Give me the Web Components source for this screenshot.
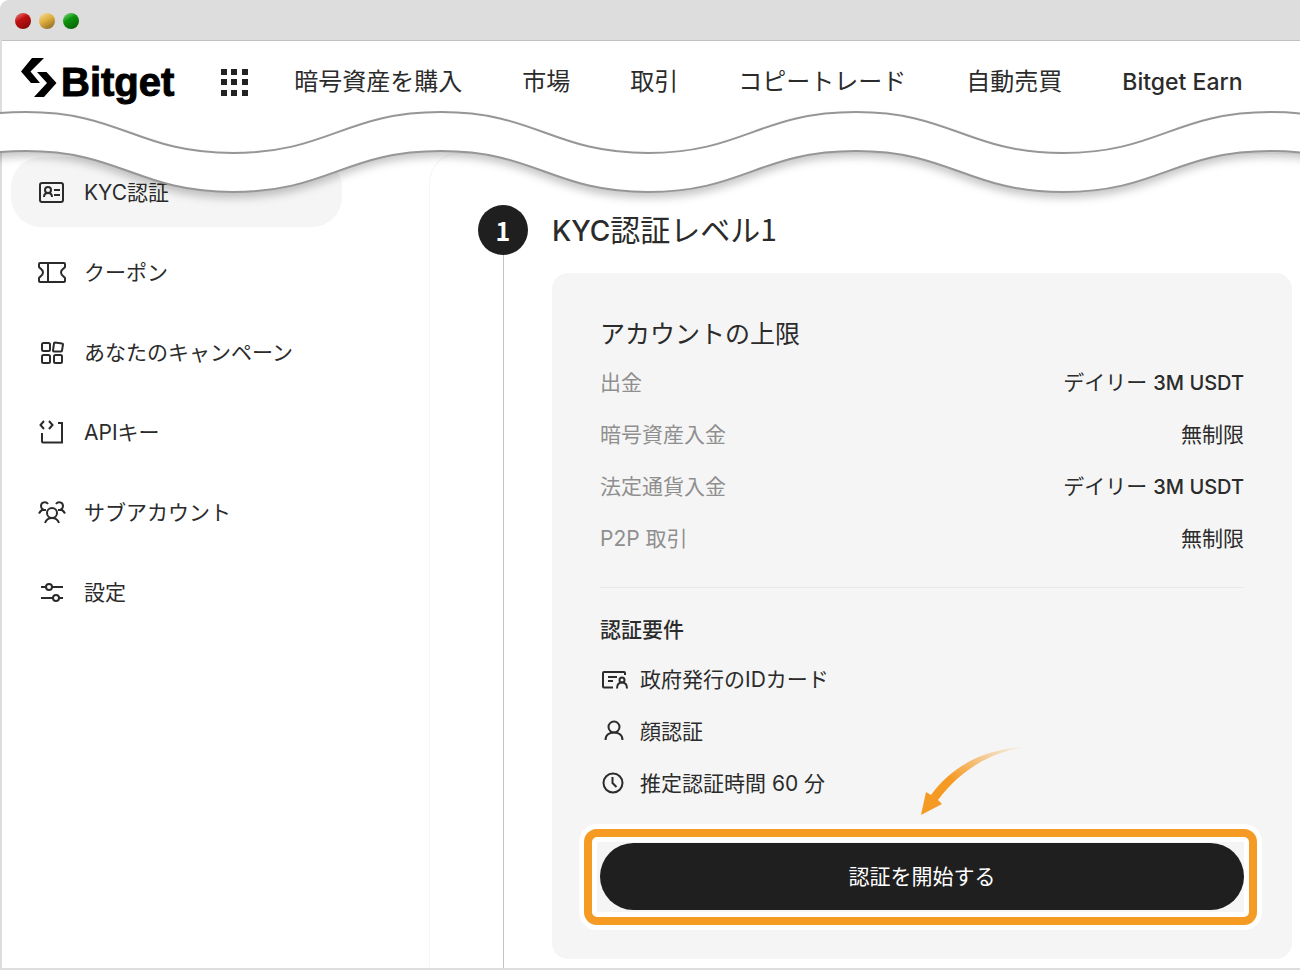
<!DOCTYPE html>
<html lang="ja">
<head>
<meta charset="utf-8">
<meta name="viewport" content="width=device-width, initial-scale=1">
<title>Bitget KYC認証</title>
<style>
    body {
        margin: 0;
        background: #fff;
        color: #2b2b2b;
        font-family: Inter, "Noto Sans CJK JP", sans-serif;
        font-size: 21px;
    }
    b {
        font-family: Inter, sans-serif;
        font-size: 28px;
        font-weight: 500;
    }
</style>
</head>
<body>
<browser-window>
    <site-header>
        <nav-link>暗号資産を購入</nav-link>
        <nav-link>市場</nav-link>
        <nav-link>取引</nav-link>
        <nav-link>コピートレード</nav-link>
        <nav-link>自動売買</nav-link>
        <nav-link latin>Bitget Earn</nav-link>
    </site-header>
    <wave-break></wave-break>
    <page-columns>
        <side-item slot="side" icon="idcard" active>KYC認証</side-item>
        <side-item slot="side" icon="coupon">クーポン</side-item>
        <side-item slot="side" icon="apps">あなたのキャンペーン</side-item>
        <side-item slot="side" icon="api">APIキー</side-item>
        <side-item slot="side" icon="users">サブアカウント</side-item>
        <side-item slot="side" icon="sliders">設定</side-item>
        <kyc-step number="1">
            <span slot="title"><b>KYC</b>認証レベル1</span>
            <kyc-card heading="アカウントの上限" requirements="認証要件">
                <limit-row slot="limits" label="出金" value="デイリー" amount="3M USDT"></limit-row>
                <limit-row slot="limits" label="暗号資産入金" value="無制限"></limit-row>
                <limit-row slot="limits" label="法定通貨入金" value="デイリー" amount="3M USDT"></limit-row>
                <limit-row slot="limits" label="P2P 取引" value="無制限"></limit-row>
                <requirement-item icon="idscan">政府発行のIDカード</requirement-item>
                <requirement-item icon="person">顔認証</requirement-item>
                <requirement-item icon="clock">推定認証時間 60 分</requirement-item>
                <start-button slot="action">認証を開始する</start-button>
            </kyc-card>
        </kyc-step>
    </page-columns>
</browser-window>

<script>
const icons = {
    idcard: `<rect x="2" y="5" width="23" height="19" rx="2"/>
        <circle cx="10" cy="12" r="3"/><path d="M6 19c0-3 2-4 4-4s4 1 4 4M16 12h6M16 17h6"/>`,
    coupon: `<path d="M2 5h24q1 0 1 1v3c0 1-4 2-4 5.500s4 4.500 4 5.500v3q0 1-1 1H2q-1 0-1-1v-3c0-1 4-2 4-5.500S1 10 1 9V6q0-1 1-1zM10 5v19"/>`,
    apps: `<rect x="4" y="5" width="8" height="8" rx="1.500"/><path d="M17 4.500l7 1q1 0 1 1l-1 6q0 1-1 1h-7q-1 0-1-1l1-7q0-1 1-1z"/>
        <rect x="4" y="17" width="8" height="8" rx="1.500"/><rect x="16" y="17" width="8" height="8" rx="1.500"/>`,
    api: `<path d="M6 3L2.500 7 6 11M11 3l3.500 4L11 11M20 5h4v19.500H5q-1 0-1-1V15"/>`,
    users: `<circle cx="14" cy="15" r="5"/><path d="M7 25c1-3 4-5 7-5s6 2 7 5M10 6C8 3 3 4 3 8c0 2 1 3 2 3.500-2 1-3 2-4 4M5 12h3M18 6c2-3 7-2 7 2 0 2-1 3-2 3.500 2 1 3 2 4 4M23 12h-3"/>`,
    sliders: `<path d="M3 9h5M14 9h11M3 20h12M21 20h4"/><circle cx="11" cy="9" r="3"/><circle cx="18" cy="20" r="3"/>`,
    idscan: `<path d="M13 22.500H4q-1 0-1-1V8q0-1 1-1h20q1 0 1 1v2M8 12h9M8 16h5"/>
        <circle cx="22" cy="15" r="2.500"/><path d="M17 23.500c0-4 2-6 5-6s5 2 5 6"/>`,
    person: `<circle cx="14" cy="10" r="5.500"/><path d="M5.500 23c0-5 4-7.500 8.500-7.500s8.500 2.500 8.500 7.500"/>`,
    clock: `<circle cx="13" cy="14" r="9.500"/><path d="M12.500 8v6l4 4"/>`
};

const iconSvg = (name) => `<svg width="28" height="28" viewBox="0 0 28 28" fill="none"
    stroke="currentColor" stroke-width="2" aria-hidden="true">${icons[name]}</svg>`;

class BaseElement extends HTMLElement {
    constructor() {
        super();
        this.attachShadow({mode: "open"});
    }
    connectedCallback() {
        this.shadowRoot.innerHTML = this.render();
    }
}

class BrowserWindow extends BaseElement {
    render() {
        return `
            <style>
                :host {
                    display: flex;
                    flex-direction: column;
                    box-sizing: border-box;
                    min-height: 100vh;
                    border-left: 2px solid #ddd;
                    border-bottom: 2px solid #ddd;
                    border-top-left-radius: 9px;
                }
                #bar {
                    display: flex;
                    align-items: center;
                    gap: 8px;
                    height: 41px;
                    padding: 2px 0 0 13px;
                    box-sizing: border-box;
                    background: #ddd;
                    border-bottom: 1px solid #c0c0c0;
                    border-top-left-radius: 7px;
                }
                i {
                    width: 16px;
                    height: 16px;
                    border-radius: 50%;
                }
                .red { background: linear-gradient(150deg, #e88 0, #c11010 40%, #7a0808 100%); }
                .yellow { background: linear-gradient(150deg, #f8e0a0 0, #dfae3e 45%, #7d5f1c 100%); }
                .green { background: linear-gradient(150deg, #8d8 0, #0c930c 40%, #075507 100%); }
            </style>
            <div id="bar"><i class="red"></i><i class="yellow"></i><i class="green"></i></div>
            <slot></slot>
        `;
    }
}

class SiteHeader extends BaseElement {
    render() {
        return `
            <style>
                :host {
                    display: flex;
                    align-items: center;
                    height: 81px;
                    padding-left: 19px;
                    overflow: hidden;
                    white-space: nowrap;
                }
                #logo {
                    display: flex;
                    align-items: center;
                    gap: 4px;
                    color: #000;
                    text-decoration: none;
                    font: bold 40px/48px "Liberation Sans", sans-serif;
                    -webkit-text-stroke: 1px #000;
                }
                #logo svg { margin-bottom: 8px; }
                button {
                    display: flex;
                    margin: 0 46px;
                    padding: 0;
                    border: 0;
                    background: none;
                }
                nav {
                    display: flex;
                    gap: 60px;
                }
            </style>
            <a id="logo" href="#">
                <svg width="36" height="40" viewBox="0 0 36 40" aria-hidden="true">
                    <path d="M11 0h12L9.500 13.500 19 25H10L0 13.500zM16 14h9.500l10 11L23 39H13L26 25z"/>
                </svg>
                <span>Bitget</span>
            </a>
            <button aria-label="メニュー">
                <svg width="28" height="28" fill="#222">
                    <path d="M1 1h6v6H1zM11 1h6v6h-6zM22 1h6v6h-6zM1 11h6v6H1zM11 11h6v6h-6zM22 11h6v6h-6zM1 22h6v6H1zM11 22h6v6h-6zM22 22h6v6h-6z"/>
                </svg>
            </button>
            <nav><slot></slot></nav>
        `;
    }
}

class NavLink extends BaseElement {
    render() {
        return `
            <style>
                :host { display: block; }
                a {
                    color: #2b2b2b;
                    text-decoration: none;
                    font-size: 24px;
                    line-height: 36px;
                }
                :host([latin]) a {
                    font-size: 23px;
                    font-weight: 500;
                }
            </style>
            <a href="#"><slot></slot></a>
        `;
    }
}

// Torn strip between the header and the page: two parallel waves, white in between
class WaveBreak extends BaseElement {
    render() {
        let wave = "";
        let back = "";
        for (let i = 0; i < 16; i++) {
            const dy = i % 2 ? -41 : 41;
            const dx = i % 2 ? 208 : 207;
            wave += `c95 0 112 ${dy} ${dx} ${dy}`;
            back = `c-${dx - 112} 0-${dx - 95} ${-dy}-${dx} ${-dy}` + back;
        }
        return `
            <style>
                :host {
                    display: block;
                    position: relative;
                    z-index: 1;
                    height: 31px;
                }
                svg {
                    position: absolute;
                    top: -11px;
                    left: -2px;
                    width: calc(100% + 2px);
                    height: 110px;
                    pointer-events: none;
                }
                .fill {
                    fill: #fff;
                    filter: drop-shadow(0 6px 4px rgba(0, 0, 0, .22));
                }
                .line {
                    fill: none;
                    stroke: #969696;
                    stroke-width: 2;
                }
            </style>
            <svg aria-hidden="true">
                <path class="fill" d="M-389 1${wave}v39${back}z"/>
                <path class="line" d="M-389 1${wave}"/>
                <path class="line" d="M-389 40${wave}"/>
            </svg>
        `;
    }
}

class PageColumns extends BaseElement {
    render() {
        return `
            <style>
                :host {
                    display: flex;
                    flex: 1;
                }
                aside {
                    flex: 0 0 427px;
                    box-sizing: border-box;
                    padding: 4px 87px 0 9px;
                }
                aside nav {
                    display: flex;
                    flex-direction: column;
                    gap: 10px;
                }
                main {
                    display: flex;
                    flex: 1;
                    padding: 51px 8px 0 48px;
                    border: 1px solid #f5f5f5;
                    border-width: 1px 0 0 1px;
                    border-top-left-radius: 30px;
                }
            </style>
            <aside><nav><slot name="side"></slot></nav></aside>
            <main><slot></slot></main>
        `;
    }
}

class SideItem extends BaseElement {
    render() {
        return `
            <style>
                :host { display: block; }
                a {
                    display: flex;
                    align-items: center;
                    gap: 18px;
                    height: 70px;
                    padding-left: 27px;
                    border-radius: 30px;
                    color: #2b2b2b;
                    text-decoration: none;
                    white-space: nowrap;
                }
                span { padding-bottom: 3px; }
                :host([active]) a { background: #f5f5f5; }
            </style>
            <a href="#">${iconSvg(this.getAttribute("icon"))}<span><slot></slot></span></a>
        `;
    }
}

class KycStep extends BaseElement {
    render() {
        return `
            <style>
                :host {
                    display: flex;
                    flex: 1;
                    gap: 24px;
                }
                #rail {
                    display: flex;
                    flex-direction: column;
                    align-items: center;
                }
                #number {
                    width: 50px;
                    height: 50px;
                    border-radius: 50%;
                    background: #1f1f1f;
                    color: #fff;
                    font: bold 25px/50px "Noto Sans CJK JP", sans-serif;
                    text-align: center;
                }
                #line {
                    flex: 1;
                    width: 1px;
                    background: #c4c4c4;
                }
                #content { flex: 1; }
                h1 {
                    height: 50px;
                    margin: 0 0 18px;
                    font: 400 30px/46px "Noto Sans CJK JP", sans-serif;
                }
            </style>
            <div id="rail">
                <div id="number">${this.getAttribute("number")}</div>
                <div id="line"></div>
            </div>
            <div id="content">
                <h1><slot name="title"></slot></h1>
                <slot></slot>
            </div>
        `;
    }
}

class KycCard extends BaseElement {
    render() {
        return `
            <style>
                :host {
                    display: block;
                    margin-bottom: 9px;
                    padding: 44px 48px 49px;
                    border-radius: 16px;
                    background: #f5f5f5;
                }
                h2, h3 {
                    margin: 0;
                    font-weight: 400;
                }
                h2 {
                    margin-bottom: 6px;
                    font-size: 25px;
                    line-height: 34px;
                }
                h3 {
                    margin-bottom: 7px;
                    font-size: 21px;
                    font-weight: 500;
                    line-height: 32px;
                }
                hr {
                    margin: 22px 0 26px;
                    border: 0;
                    border-top: 1px solid #e9e9e9;
                }
                #action { margin-top: 34px; }
            </style>
            <h2>${this.getAttribute("heading")}</h2>
            <slot name="limits"></slot>
            <hr>
            <h3>${this.getAttribute("requirements")}</h3>
            <slot></slot>
            <div id="action"><slot name="action"></slot></div>
        `;
    }
}

class LimitRow extends BaseElement {
    render() {
        const amount = this.getAttribute("amount");
        return `
            <style>
                :host { display: block; }
                dl {
                    display: flex;
                    justify-content: space-between;
                    margin: 0;
                    line-height: 52px;
                }
                dt { color: #8f8f8f; }
                dd { margin: 0; }
                b {
                    font-size: 20px;
                    font-weight: 500;
                }
            </style>
            <dl>
                <dt>${this.getAttribute("label")}</dt>
                <dd>${this.getAttribute("value")}${amount ? ` <b>${amount}</b>` : ""}</dd>
            </dl>
        `;
    }
}

class RequirementItem extends BaseElement {
    render() {
        return `
            <style>
                :host {
                    display: flex;
                    align-items: center;
                    gap: 12px;
                    height: 52px;
                }
                span { padding-bottom: 3px; }
            </style>
            ${iconSvg(this.getAttribute("icon"))}
            <span><slot></slot></span>
        `;
    }
}

class StartButton extends BaseElement {
    render() {
        return `
            <style>
                :host {
                    display: block;
                    position: relative;
                }
                button {
                    display: block;
                    width: 100%;
                    height: 67px;
                    padding: 0 0 3px;
                    border: 0;
                    border-radius: 34px;
                    background: #1f1f1f;
                    color: #fff;
                    font: inherit;
                }
                #ring {
                    position: absolute;
                    inset: -14px -13px -15px -16px;
                    box-sizing: border-box;
                    border: 8px solid #f59a23;
                    border-radius: 13px;
                    box-shadow: 0 0 0 5px #fff, inset 0 0 0 5px #fff;
                    pointer-events: none;
                }
                svg {
                    position: absolute;
                    left: 50%;
                    bottom: 94px;
                    margin-left: -2px;
                }
            </style>
            <button><slot></slot></button>
            <div id="ring"></div>
            <svg width="110" height="70" aria-hidden="true">
                <defs>
                    <linearGradient id="fade" x1="0" y1="1" x2="1" y2="0">
                        <stop offset=".4" stop-color="#f59a23"/>
                        <stop offset="1" stop-color="#f59a23" stop-opacity="0"/>
                    </linearGradient>
                </defs>
                <path fill="url(#fade)" d="M1 69L6 46l5 3C32 20 65 2 108 1 70 5 40 25 18 54l4 4z"/>
            </svg>
        `;
    }
}

customElements.define("browser-window", BrowserWindow);
customElements.define("site-header", SiteHeader);
customElements.define("nav-link", NavLink);
customElements.define("wave-break", WaveBreak);
customElements.define("page-columns", PageColumns);
customElements.define("side-item", SideItem);
customElements.define("kyc-step", KycStep);
customElements.define("kyc-card", KycCard);
customElements.define("limit-row", LimitRow);
customElements.define("requirement-item", RequirementItem);
customElements.define("start-button", StartButton);
</script>
</body>
</html>
